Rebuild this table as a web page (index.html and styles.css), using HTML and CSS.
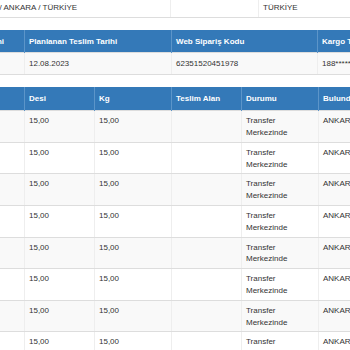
FILE: index.html
```html
<!DOCTYPE html>
<html lang="tr">
<head>
<meta charset="utf-8">
<link rel="stylesheet" href="styles.css">
</head>
<body>
<div class="page">
  <table class="tbl tbl-top">
    <colgroup><col class="c-a"><col class="c-b"><col class="c-c"></colgroup>
    <tbody>
      <tr>
        <td>Kızılay Mahallesi Atatürk Bulvarı No:58 Kat:3 Daire:9<br>Yenimahalle / ANKARA / TÜRKİYE</td>
        <td>Kayışdağı Cad.</td>
        <td>Kavaklıdere Mah. Çankaya /<br>TÜRKİYE</td>
      </tr>
    </tbody>
  </table>

  <table class="tbl tbl-mid">
    <colgroup><col class="m-0"><col class="m-1"><col class="m-2"><col class="m-3"></colgroup>
    <thead>
      <tr><th>Sipariş Tarihi</th><th>Planlanan Teslim Tarihi</th><th>Web Sipariş Kodu</th><th>Kargo Takip No</th></tr>
    </thead>
    <tbody>
      <tr class="odd"><td>10.08.2023</td><td>12.08.2023</td><td>62351520451978</td><td>188*******</td></tr>
    </tbody>
  </table>

  <table class="tbl tbl-main">
    <colgroup><col class="d-0"><col class="d-1"><col class="d-2"><col class="d-3"><col class="d-4"><col class="d-5"></colgroup>
    <thead>
      <tr><th>Parça</th><th>Desi</th><th>Kg</th><th>Teslim Alan</th><th>Durumu</th><th>Bulunduğu Şube</th></tr>
    </thead>
    <tbody>
      <tr class="odd"><td>1</td><td>15,00</td><td>15,00</td><td></td><td>Transfer Merkezinde</td><td>ANKARA AKTARMA</td></tr>
      <tr><td>2</td><td>15,00</td><td>15,00</td><td></td><td>Transfer Merkezinde</td><td>ANKARA AKTARMA</td></tr>
      <tr class="odd"><td>3</td><td>15,00</td><td>15,00</td><td></td><td>Transfer Merkezinde</td><td>ANKARA AKTARMA</td></tr>
      <tr><td>4</td><td>15,00</td><td>15,00</td><td></td><td>Transfer Merkezinde</td><td>ANKARA AKTARMA</td></tr>
      <tr class="odd"><td>5</td><td>15,00</td><td>15,00</td><td></td><td>Transfer Merkezinde</td><td>ANKARA AKTARMA</td></tr>
      <tr><td>6</td><td>15,00</td><td>15,00</td><td></td><td>Transfer Merkezinde</td><td>ANKARA AKTARMA</td></tr>
      <tr class="odd"><td>7</td><td>15,00</td><td>15,00</td><td></td><td>Transfer Merkezinde</td><td>ANKARA AKTARMA</td></tr>
      <tr><td>8</td><td>15,00</td><td>15,00</td><td></td><td>Transfer Merkezinde</td><td>ANKARA AKTARMA</td></tr>
    </tbody>
  </table>
</div>
</body>
</html>
```

FILE: styles.css
```css
html, body {
  margin: 0;
  padding: 0;
  background: #fff;
  overflow: hidden;
  width: 350px;
  height: 350px;
}
body {
  font-family: "Liberation Sans", Arial, sans-serif;
  font-size: 8px;
  color: #333;
}
.page {
  margin-left: -51px;
  margin-top: -14px;
  width: 540px;
}
.tbl {
  border-collapse: collapse;
  table-layout: fixed;
  margin-bottom: 12px;
}
.tbl td, .tbl th {
  text-align: left;
  vertical-align: top;
  overflow: hidden;
}
.tbl td {
  border-top: 1px solid #ddd;
  border-bottom: 1px solid #ddd;
  border-left: 1px solid #eee;
  border-right: 1px solid #eee;
  padding: 4px 4px 3px;
  line-height: 11.8px;
}
.tbl th {
  background: #3479b8;
  color: #fff;
  font-weight: bold;
  padding: 6px 4px 5px;
  line-height: 11.8px;
  border-left: 1px solid #5c95c9;
  border-right: 1px solid #5c95c9;
  vertical-align: middle;
  white-space: nowrap;
}
.tbl tr.odd td { background: #f9f9f9; }

.tbl-top { width: 451px; }
.tbl-top td { border-top: none; white-space: nowrap; }
.c-a { width: 221px; }
.c-b { width: 88px; }
.c-c { width: 142px; }

.tbl-mid { width: 518px; }
.tbl-mid td { padding: 5px 4px; line-height: 11px; }
.m-0 { width: 75px; }
.m-1 { width: 147px; }
.m-2 { width: 146px; }
.m-3 { width: 150px; }

.tbl-main { width: 489px; }
.d-0 { width: 75px; }
.d-1 { width: 70px; }
.d-2 { width: 77px; }
.d-3 { width: 70px; }
.d-4 { width: 77px; }
.d-5 { width: 120px; }
```
